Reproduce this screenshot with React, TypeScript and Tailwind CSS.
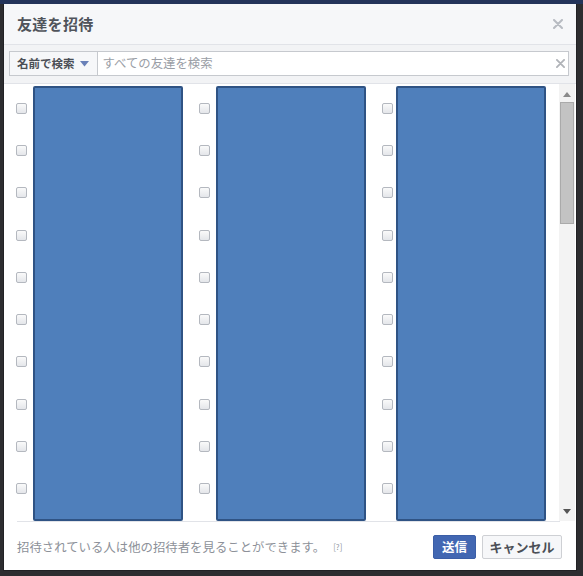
const ROWS = Array.from({ length: 10 }, (_, i) => i);

function Checkbox() {
  return (
    <div className="flex h-[42.3px] items-center">
      <span className="block h-[11px] w-[11px] rounded-[2px] border border-[#b4b8bf] bg-gradient-to-b from-[#fafafa] to-[#e4e6ea]" />
    </div>
  );
}

function FriendColumn({ gap }: { gap: string }) {
  return (
    <div className="flex h-full">
      <div className="flex w-[11px] flex-col pt-[3px]">
        {ROWS.map((r) => (
          <Checkbox key={r} />
        ))}
      </div>
      {/* redacted friend list */}
      <div className={`${gap} mt-[2px] h-[435px] w-[150px] rounded-[2px] border-2 border-[#2f5384] bg-[#4f7fbb]`} />
    </div>
  );
}

function CloseIcon({ size, color }: { size: number; color: string }) {
  return (
    <svg width={size} height={size} viewBox="0 0 10 10">
      <path d="M1 1 L9 9 M9 1 L1 9" stroke={color} strokeWidth="2" strokeLinecap="round" />
    </svg>
  );
}

export default function App() {
  return (
    <div
      className="h-[576px] w-[583px] overflow-hidden border-t-[4px] border-[#24345a] bg-[#2d2d30] pl-[4px]"
      style={{ fontFamily: '"Noto Sans CJK JP", "Liberation Sans", sans-serif' }}
    >
      <div className="flex h-[566px] w-[572px] flex-col bg-white shadow-[0_0_0_1px_rgba(0,0,0,0.25)]">
        {/* Header */}
        <div className="flex h-[41px] items-center justify-between border-b border-[#e1e3e8] bg-[#f6f7f9] pl-[13px] pr-[13px]">
          <h1 className="text-[15px] font-bold tracking-[0.3px] text-[#50545b]">友達を招待</h1>
          <CloseIcon size={10} color="#b7bbc2" />
        </div>

        {/* Search row */}
        <div className="border-b border-[#e1e3e8] bg-[#f2f3f5] pb-[7px] pl-[5px] pr-[7px] pt-[6px]">
          <div className="flex h-[25px] items-stretch border border-[#c6c9ce] bg-white">
            <div className="flex items-center gap-[5px] border-r border-[#c6c9ce] bg-[#f6f7f9] pl-[7px] pr-[8px]">
              <span className="text-[11.5px] font-bold text-[#4b4f56]">名前で検索</span>
              <svg width="9" height="6" viewBox="0 0 9 6">
                <path d="M0 0 H9 L4.5 5.5 Z" fill="#6980b8" />
              </svg>
            </div>
            <div className="flex flex-1 items-center justify-between pl-[5px] pr-[3px]">
              <span className="text-[12.4px] text-[#9a9ea6]">すべての友達を検索</span>
              <CloseIcon size={9} color="#b0b3b8" />
            </div>
          </div>
        </div>

        {/* Friend list */}
        <div className="flex h-[437px] overflow-hidden">
          <div className="flex flex-1 gap-[16px] pl-[12px]">
            <FriendColumn gap="ml-[6px]" />
            <FriendColumn gap="ml-[6px]" />
            <FriendColumn gap="ml-[3px]" />
          </div>
          {/* Scrollbar */}
          <div className="mr-[1px] flex w-[16px] flex-col items-center bg-[#f3f3f3]">
            <svg className="mt-[8px]" width="8" height="5" viewBox="0 0 8 5">
              <path d="M0 5 H8 L4 0 Z" fill="#8a8a8a" />
            </svg>
            <div className="mt-[5px] h-[122px] w-[14px] border border-[#aaaaaa] bg-[#c3c3c3]" />
            <div className="flex-1" />
            <svg className="mb-[7px]" width="8" height="5" viewBox="0 0 8 5">
              <path d="M0 0 H8 L4 5 Z" fill="#555555" />
            </svg>
          </div>
        </div>

        {/* Footer */}
        <div className="ml-[13px] mr-[16px] flex flex-1 items-center justify-between border-t border-[#e1e3e8] pt-[2px]">
          <p className="flex items-center text-[12.4px] text-[#8d9199]">
            招待されている人は他の招待者を見ることができます。
            <span className="ml-[8px] text-[8px] text-[#9197a3]">[?]</span>
          </p>
          <div className="-mr-[2px] flex gap-[6px]">
            <button className="h-[24px] w-[43px] rounded-[2px] border border-[#3b5ea6] bg-[#4267b2] text-[12.5px] font-bold text-white">
              送信
            </button>
            <button className="h-[24px] w-[80px] rounded-[2px] border border-[#ced0d4] bg-[#f6f7f9] text-[13px] font-bold text-[#4b4f56]">
              キャンセル
            </button>
          </div>
        </div>
      </div>
    </div>
  );
}
